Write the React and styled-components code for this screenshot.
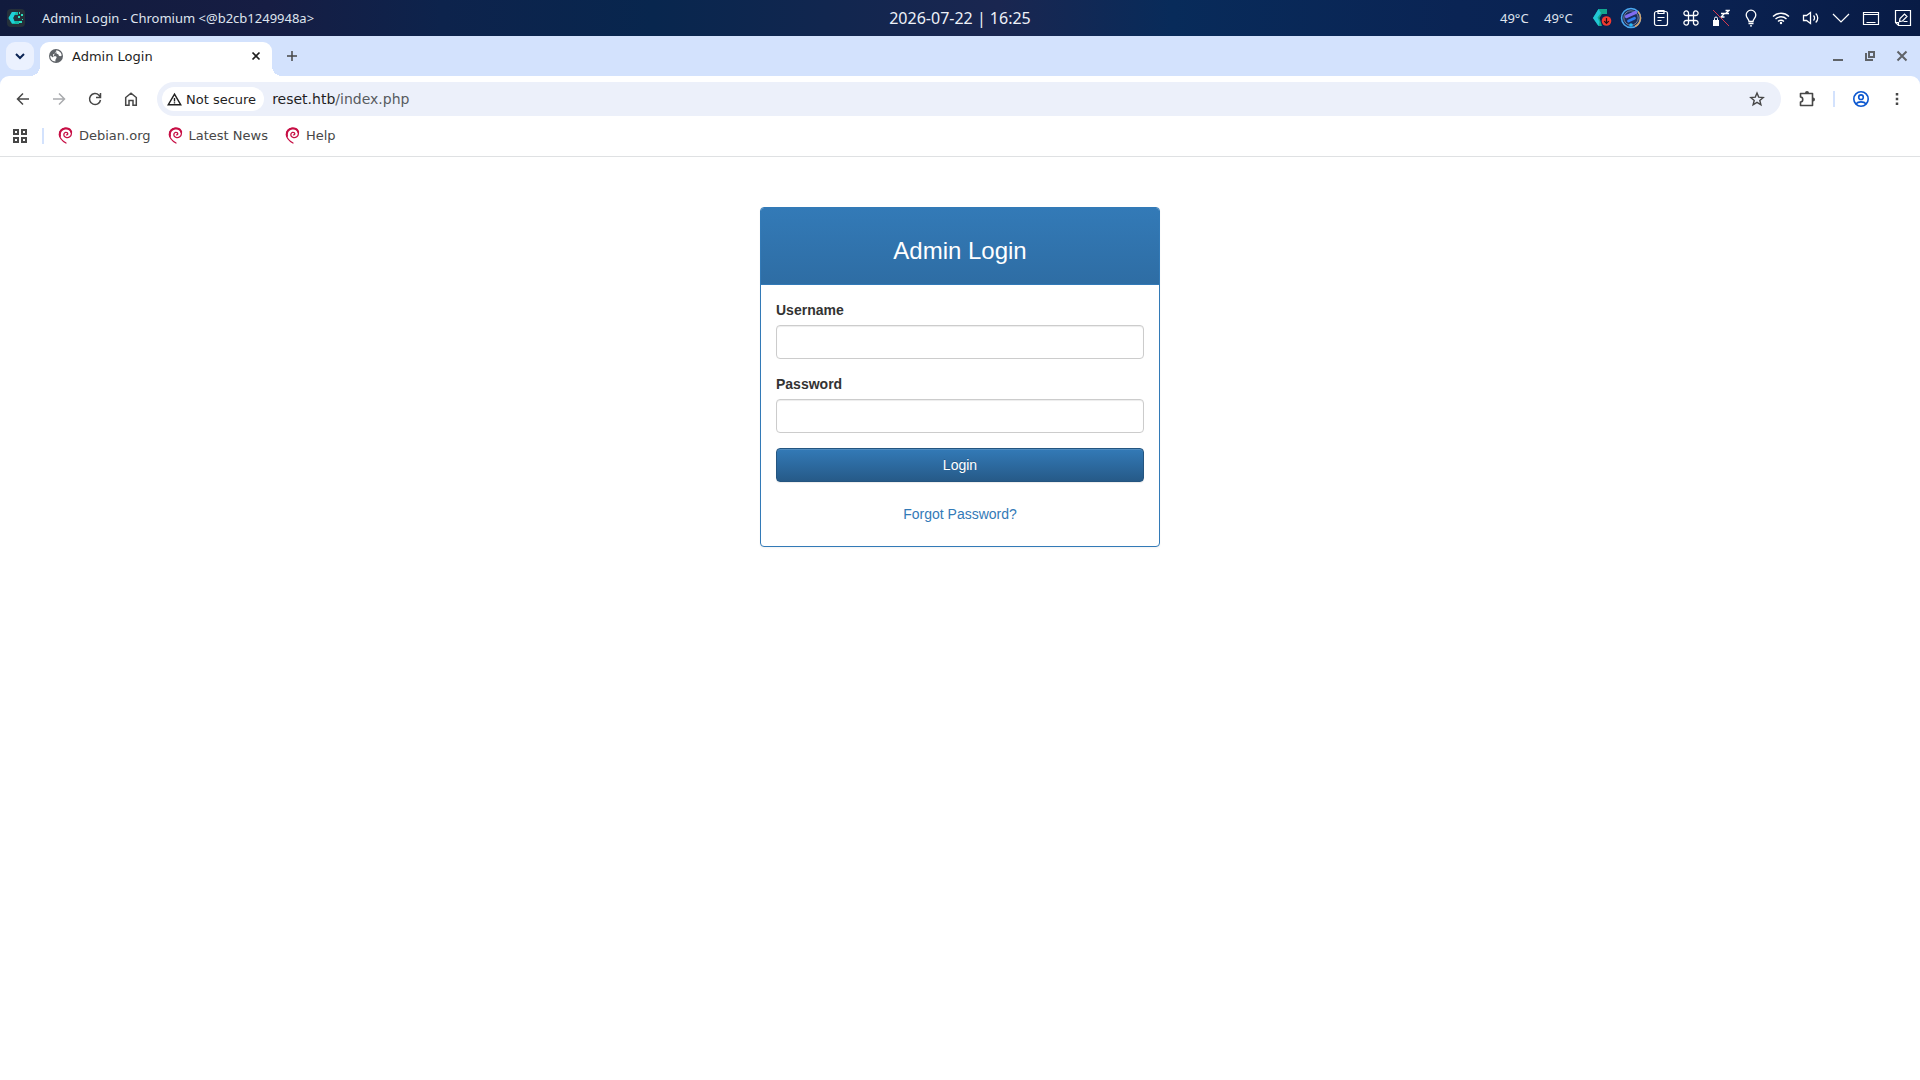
import React from 'react';
import styled, { createGlobalStyle } from 'styled-components';

const GlobalStyle = createGlobalStyle`
  * {
    box-sizing: border-box;
  }
  body {
    margin: 0;
    background: #fff;
    font-family: "DejaVu Sans", sans-serif;
  }
  button {
    border: 0;
    padding: 0;
    background: none;
    cursor: pointer;
  }
`;

/* desktop bar */
const DesktopBar = styled.header`
  display: grid;
  grid-template-columns: 1fr auto 1fr;
  align-items: center;
  height: 36px;
  color: #eef1f8;
  background: linear-gradient(90deg, #111b3d 0%, #161d43 14%, #0d234c 23%, #08264e 34%, #1a2650 52%, #082b5a 61%, #0a2454 76%, #0a2150 90%, #081b45 100%);
`;
const WindowTitle = styled.div`
  display: flex;
  align-items: center;
  gap: 16px;
  padding-left: 6px;
  font: 13px "Noto Sans", sans-serif;
  color: #dfe4ee;
`;
const Clock = styled.time`
  font: 16px "Noto Sans", sans-serif;
`;
const Tray = styled.div`
  display: flex;
  justify-content: flex-end;
  align-items: center;
`;
const Temp = styled.span`
  width: 44px;
  font: 13px "Noto Sans", sans-serif;
  color: #dfe4ee;
`;
const TrayButton = styled.button`
  display: flex;
  align-items: center;
  justify-content: center;
  width: ${(props) => props.$width || 30}px;
  height: 36px;
  color: #fff;
`;

/* browser tabs */
const TabStrip = styled.div`
  display: flex;
  align-items: center;
  height: 40px;
  padding: 0 2px 0 6px;
  background: #d3e2fd;
`;
const TabSearch = styled.button`
  display: flex;
  align-items: center;
  justify-content: center;
  width: 28px;
  height: 28px;
  border-radius: 9px;
  background: #ebf1fe;
`;
const Tab = styled.div`
  position: relative;
  display: flex;
  align-items: center;
  align-self: flex-end;
  gap: 8px;
  width: 232px;
  height: 34px;
  margin-left: 6px;
  padding: 0 8px 6px 8px;
  border-radius: 9px 9px 0 0;
  background: #fff;
  font-size: 13px;
  color: #1f1f1f;

  &::before,
  &::after {
    content: "";
    position: absolute;
    bottom: 0;
    width: 10px;
    height: 10px;
  }
  &::before {
    right: 100%;
    background: radial-gradient(circle at 0 0, transparent 10px, #fff 10px);
  }
  &::after {
    left: 100%;
    background: radial-gradient(circle at 100% 0, transparent 10px, #fff 10px);
  }
`;
const TabTitle = styled.span`
  flex: 1;
`;
const IconButton = styled.button`
  display: flex;
  align-items: center;
  justify-content: center;
  width: ${(props) => props.$width || 36}px;
  height: 28px;
  color: ${(props) => props.$color || '#474747'};
`;
const WindowControls = styled.div`
  display: flex;
  margin-left: auto;
`;

/* toolbar */
const ToolbarBack = styled.div`
  background: #d3e2fd;
`;
const Toolbar = styled.div`
  display: flex;
  align-items: center;
  height: 46px;
  padding: 0 5px;
  border-radius: 9px 9px 0 0;
  background: #fff;
`;
const Omnibox = styled.form`
  display: flex;
  flex: 1;
  align-items: center;
  height: 34px;
  margin: 0 8px;
  padding: 0 6px 0 5px;
  border-radius: 17px;
  background: #ecf0fa;
`;
const Chip = styled.button`
  display: flex;
  align-items: center;
  gap: 4px;
  height: 24px;
  padding: 0 8px 0 5px;
  border-radius: 12px;
  background: #fff;
  font: 13px "DejaVu Sans", sans-serif;
  color: #1f1f1f;
`;
const Url = styled.div`
  flex: 1;
  padding-left: 8px;
  font-size: 14px;
  color: #575b60;
`;
const Host = styled.span`
  color: #1f1f1f;
`;
const Divider = styled.span`
  width: 2px;
  height: 16px;
  background: #d3e2fd;
`;
const Bookmarks = styled.nav`
  display: flex;
  align-items: center;
  height: 35px;
  padding: 0 13px 7px 13px;
  border-bottom: 1px solid #dfe1e3;
`;
const BookmarksDivider = styled(Divider)`
  margin-left: 15px;
  margin-right: 14px;
`;
const Bookmark = styled.a`
  display: flex;
  align-items: center;
  gap: 6px;
  margin-right: 17px;
  font-size: 13px;
  color: #474747;
  text-decoration: none;
`;

/* login page */
const Page = styled.main`
  display: flex;
  justify-content: center;
  padding: 50px 15px;
  font: 14px/20px "Liberation Sans", Arial, sans-serif;
`;
const Panel = styled.section`
  width: 400px;
  border: 1px solid #337ab7;
  border-radius: 4px;
  background: #fff;
  box-shadow: 0 1px 2px rgba(0, 0, 0, 0.05);
`;
const PanelHeading = styled.div`
  padding: 30px 15px 20px;
  border-bottom: 1px solid #337ab7;
  border-radius: 3px 3px 0 0;
  background: linear-gradient(#337ab7, #2e6da4);
`;
const Heading = styled.h3`
  margin: 0;
  font-size: 24px;
  line-height: 26px;
  font-weight: 500;
  text-align: center;
  color: #fff;
`;
const LoginForm = styled.form`
  display: flex;
  flex-direction: column;
  gap: 15px;
  padding: 15px;
`;
const Field = styled.div`
  display: flex;
  flex-direction: column;
  gap: 5px;
`;
const Label = styled.label`
  font-weight: bold;
  color: #333;
`;
const Input = styled.input`
  height: 34px;
  padding: 6px 12px;
  border: 1px solid #ccc;
  border-radius: 4px;
  background: #fff;
  font: inherit;
  color: #555;
  box-shadow: inset 0 1px 1px rgba(0, 0, 0, 0.075);
`;
const LoginButton = styled.button`
  height: 34px;
  border: 1px solid #245580;
  border-radius: 4px;
  background: linear-gradient(#337ab7, #265a88);
  font: inherit;
  color: #fff;
  text-shadow: 0 -1px 0 rgba(0, 0, 0, 0.2);
  box-shadow: inset 0 1px 0 rgba(255, 255, 255, 0.15), 0 1px 1px rgba(0, 0, 0, 0.075);
`;
const ForgotLink = styled.a`
  padding: 7px 12px;
  text-align: center;
  color: #337ab7;
  text-decoration: none;
`;

const Icon = ({ size = 20, width = 1.5, children }) => (
  <svg width={size} height={size} viewBox={`0 0 ${size} ${size}`} fill="none" stroke="currentColor" strokeWidth={width} aria-hidden="true">
    {children}
  </svg>
);

const AppLogo = () => (
  <Icon>
    <rect x="1" y="1" width="18" height="18" rx="4" fill="#25303a" stroke="none" />
    <path d="M12 4H6L2.5 10 6 16h7v-3H8.500L7 10l1.500-3H12z" fill="#12b8a6" stroke="none" />
    <path d="M2.500 10L6 4h4L7 10l2 5H6z" fill="#20cfd8" stroke="none" />
    <path d="M12 8h2v2h-2zM15 6h2v2h-2zM16 11h1v1h-1zM13 13h3v2h-3zM13 4h1v2h-1z" fill="#2be0c0" stroke="none" />
  </Icon>
);

const Swirl = () => (
  <svg width="15" height="17" viewBox="0 0 15 17" fill="none" stroke="#c70f45" strokeLinecap="round" aria-hidden="true">
    <path d="M8 16C4.500 14 1.500 11 1.400 7.500C1.300 3.500 4 1.200 7.700 1.200C11.300 1.200 13.600 3.600 13.400 6.700C13.200 9.500 10.800 11 8.600 10.600C6.300 10.100 5.400 8.400 6 6.800C6.600 5.400 8.300 4.900 9.300 5.800C10.200 6.600 9.700 8 8.500 7.900" strokeWidth="1.3" />
    <path d="M2 9C1.200 5 3.500 2 7 1.500C10 1.100 12.500 2.500 13.200 5" strokeWidth="2" />
  </svg>
);

const bookmarks = ['Debian.org', 'Latest News', 'Help'];

const DesktopPanel = () => (
  <DesktopBar>
    <WindowTitle>
      <AppLogo />
      <span>Admin Login - Chromium &lt;@b2cb1249948a&gt;</span>
    </WindowTitle>
    <Clock>2026-07-22 | 16:25</Clock>
    <Tray>
      <Temp>49°C</Temp>
      <Temp>49°C</Temp>
      <TrayButton aria-label="Updates" $width={28}>
        <Icon>
          <path d="M15 1H6.500L1 10l5.500 8H10l-2.500-8L10 6h5z" fill="#12a68f" stroke="none" />
          <path d="M6.500 1L1 10l5.500 8 1-4-2-4.500L9 5z" fill="#22c6d6" stroke="none" />
          <circle cx="14.5" cy="13" r="4.8" fill="#f33a30" stroke="none" />
          <path d="M14.500 10v5M12.200 13.200l2.300 2.300 2.300-2.300" stroke="#231018" strokeWidth="1.2" />
        </Icon>
      </TrayButton>
      <TrayButton aria-label="System monitor">
        <Icon size={22}>
          <circle cx="11" cy="11" r="9.5" fill="#1a2d5c" stroke="#4aa8f0" />
          <path d="M18 4.500a9.500 9.500 0 0 1-3 15" stroke="#d9a46a" />
          <circle cx="11" cy="11" r="7.2" stroke="#71829f" strokeWidth="1" />
          <path d="M6.500 9.500l9-4" stroke="#7f6cf2" strokeWidth="3.2" strokeLinecap="round" />
          <path d="M8.500 14l6-2.700" stroke="#2f7ff0" strokeWidth="2.8" strokeLinecap="round" />
          <circle cx="11" cy="18" r="1.8" fill="#25b8f5" stroke="none" />
        </Icon>
      </TrayButton>
      <TrayButton aria-label="Clipboard">
        <Icon size={18} width={1.2}>
          <rect x="2.5" y="2.5" width="13" height="14" rx="2" />
          <path d="M6 1.500h6v3H6zM5.500 8.500h7M5.500 11.500h4" />
        </Icon>
      </TrayButton>
      <TrayButton aria-label="Shortcuts">
        <Icon size={18} width={1.3}>
          <path d="M6.500 6.500h5v5h-5zM6.500 6.500H4.500a2.300 2.300 0 1 1 2-2zM11.500 6.500v-2a2.300 2.300 0 1 1 2 2zM11.500 11.500h2a2.300 2.300 0 1 1-2 2zM6.500 11.500v2a2.300 2.300 0 1 1-2-2z" />
        </Icon>
      </TrayButton>
      <TrayButton aria-label="Screen lock off">
        <Icon size={18} width={1}>
          <path d="M1 11h6v6H1z" fill="#fff" stroke="none" />
          <path d="M2.500 11V9.500a1.500 1.500 0 0 1 3 0V11" />
          <path d="M9 4.500h3.500L9 8h3.500M13.500 1.500H17L13.500 4.500H17" strokeWidth="1.3" />
          <path d="M1 1l16 16" stroke="#d83a50" />
        </Icon>
      </TrayButton>
      <TrayButton aria-label="Night light">
        <Icon size={18} width={1.3}>
          <path d="M7 12.500C7 10 4.200 9 4.200 6a4.800 4.800 0 0 1 9.600 0c0 3-2.800 4-2.800 6.500zM6.500 14.500h5M8 16.800h2" />
        </Icon>
      </TrayButton>
      <TrayButton aria-label="Network">
        <Icon size={18} width={1.4}>
          <path d="M1 7.500a11.500 11.500 0 0 1 16 0M3.500 10a8 8 0 0 1 11 0M6 12.500a4.600 4.600 0 0 1 6 0" />
          <circle cx="9" cy="14" r="1.2" fill="currentColor" stroke="none" />
        </Icon>
      </TrayButton>
      <TrayButton aria-label="Volume">
        <Icon size={18} width={1.3}>
          <path d="M1.500 6.500H4.500l4-3v11l-4-3H1.500zM11.500 6.500a3.500 3.500 0 0 1 0 5M13.700 4.500a6 6 0 0 1 0 9" />
        </Icon>
      </TrayButton>
      <TrayButton aria-label="Show more">
        <Icon size={18} width={1.2}>
          <path d="M1 5l8 8 8-8" />
        </Icon>
      </TrayButton>
      <TrayButton aria-label="Show desktop">
        <Icon size={18} width={1.2}>
          <path d="M1.500 3.500h15v12h-15zM1.500 5.500h15M4.500 13.500h9" />
        </Icon>
      </TrayButton>
      <TrayButton aria-label="Notes" $width={34}>
        <Icon size={18} width={1.2}>
          <path d="M1.500 1.500h15v15h-12l-3-3zM1.500 13.500h3v3M5.500 12.500l.5-3 4.500-4.500 2.500 2.500-4.500 4.500zM9.500 12.500h4" />
        </Icon>
      </TrayButton>
    </Tray>
  </DesktopBar>
);

const BrowserTabs = () => (
  <TabStrip>
    <TabSearch aria-label="Search tabs">
      <Icon size={12} width={2}><path d="M2 4l4 4 4-4" stroke="#0b2454" /></Icon>
    </TabSearch>
    <Tab>
      <Icon size={16}>
        <circle cx="8" cy="8" r="7" fill="#5f6368" stroke="none" />
        <path d="M8 2.500C7 3.500 8.500 4.500 7 5.500S4.500 6 5 7.500s3 0 3.500 1.500-1.500 1.500-1 4.500C4 13.500 2 10.500 2.300 7.500L5 9.500M8 2.500c3 0 5.500 2 5.700 5-1.500 1.500-3.200.5-3.200-1L8.500 5.500z" fill="#fff" stroke="none" />
      </Icon>
      <TabTitle>Admin Login</TabTitle>
      <IconButton aria-label="Close tab" $width={16} $color="#1f1f1f">
        <Icon size={10} width={1.7}><path d="M1.500 1.500l7 7M8.500 1.500l-7 7" /></Icon>
      </IconButton>
    </Tab>
    <IconButton aria-label="New tab" $width={40}>
      <Icon size={12}><path d="M6 1v10M1 6h10" /></Icon>
    </IconButton>
    <WindowControls>
      <IconButton aria-label="Minimize" $width={32} $color="#5f6368">
        <Icon size={12} width={2}><path d="M1 10h10" /></Icon>
      </IconButton>
      <IconButton aria-label="Restore" $width={32} $color="#5f6368">
        <Icon size={12} width={2}><path d="M5 2h5v5H5zM2 3v7h7" /></Icon>
      </IconButton>
      <IconButton aria-label="Close window" $width={32} $color="#5f6368">
        <Icon size={12} width={2}><path d="M1.500 1.500l9 9M10.500 1.500l-9 9" /></Icon>
      </IconButton>
    </WindowControls>
  </TabStrip>
);

const BrowserToolbar = () => (
  <ToolbarBack>
    <Toolbar>
      <IconButton aria-label="Back">
        <Icon size={14}><path d="M13 7H2M7 1.500L1.500 7 7 12.500" /></Icon>
      </IconButton>
      <IconButton aria-label="Forward" $color="#a9abae">
        <Icon size={14}><path d="M1 7h11M7 1.500L12.500 7 7 12.500" /></Icon>
      </IconButton>
      <IconButton aria-label="Reload">
        <Icon size={14}><path d="M12.500 8A5.500 5.500 0 1 1 11 3.200L12.500 5M12.500 1v4.500H8" /></Icon>
      </IconButton>
      <IconButton aria-label="Home">
        <Icon size={14}><path d="M1.700 13.200V5.500L7 1.200l5.300 4.300v7.700H9V8.500H5v4.700z" /></Icon>
      </IconButton>
      <Omnibox>
        <Chip type="button">
          <Icon size={15} width={1.4}><path d="M7.500 2.200l6.300 10.600H1.200zM7.500 6v3.500M7.500 10.200v1.400" /></Icon>
          Not secure
        </Chip>
        <Url><Host>reset.htb</Host>/index.php</Url>
        <IconButton type="button" aria-label="Bookmark this page">
          <Icon size={16} width={1.4}><path d="M8 2l1.700 4.100 4.500.4-3.400 2.900 1.100 4.400L8 11.400l-3.900 2.400 1.100-4.400-3.400-2.900 4.500-.4z" /></Icon>
        </IconButton>
      </Omnibox>
      <IconButton aria-label="Extensions">
        <Icon size={18} width={1.6}>
          <path d="M2.500 3.500h12v12h-12v-3.500c3 0 3-5 0-5z" strokeLinejoin="round" />
          <path d="M7 3a2 2 0 0 1 4 0zM15 7.500a2 2 0 0 1 0 4z" fill="currentColor" stroke="none" />
        </Icon>
      </IconButton>
      <IconButton as="span" $width={18}><Divider /></IconButton>
      <IconButton aria-label="Profile" $color="#0b57d0">
        <Icon size={18} width={1.6}>
          <circle cx="9" cy="9" r="7.2" />
          <circle cx="9" cy="7.2" r="2.3" />
          <path d="M3.800 14c2.500-2.800 7.900-2.800 10.400 0" />
        </Icon>
      </IconButton>
      <IconButton aria-label="Menu">
        <Icon size={14}><path d="M7 1v2.500M7 5.750v2.500M7 10.500V13" strokeWidth="2.5" /></Icon>
      </IconButton>
    </Toolbar>
  </ToolbarBack>
);

const App = () => (
  <>
    <GlobalStyle />
    <DesktopPanel />
    <BrowserTabs />
    <BrowserToolbar />
    <Bookmarks>
      <Icon size={14} width={2}><path d="M1 1h4v4H1zM9 1h4v4H9zM1 9h4v4H1zM9 9h4v4H9z" stroke="#474747" /></Icon>
      <BookmarksDivider />
      {bookmarks.map((name) => (
        <Bookmark href="#" key={name}><Swirl />{name}</Bookmark>
      ))}
    </Bookmarks>
    <Page>
      <Panel>
        <PanelHeading><Heading>Admin Login</Heading></PanelHeading>
        <LoginForm>
          <Field>
            <Label htmlFor="username">Username</Label>
            <Input id="username" type="text" />
          </Field>
          <Field>
            <Label htmlFor="password">Password</Label>
            <Input id="password" type="password" />
          </Field>
          <LoginButton type="submit">Login</LoginButton>
          <ForgotLink href="#">Forgot Password?</ForgotLink>
        </LoginForm>
      </Panel>
    </Page>
  </>
);

export default App;
